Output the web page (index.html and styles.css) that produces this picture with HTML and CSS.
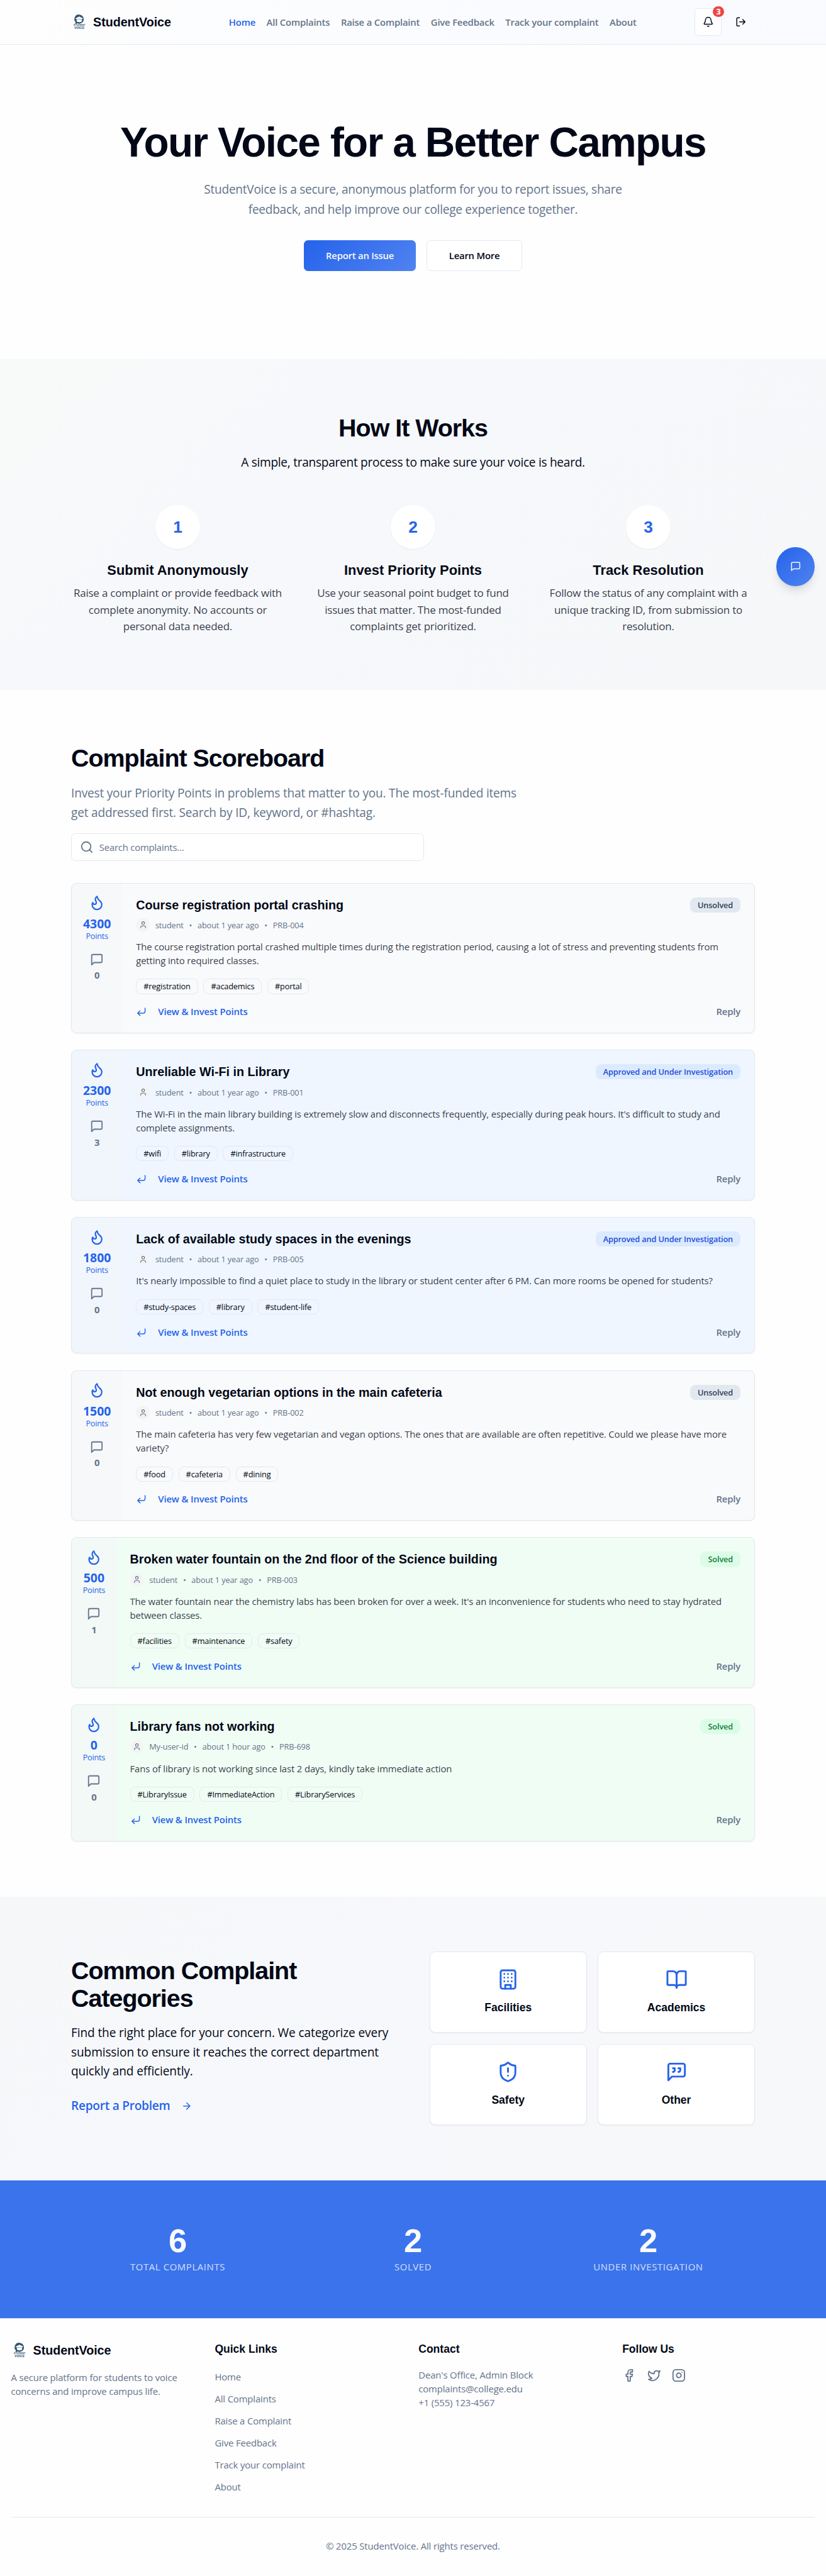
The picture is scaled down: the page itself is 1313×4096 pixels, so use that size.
FILE: index.html
```html
<!DOCTYPE html>
<html lang="en">
<head>
<meta charset="utf-8">
<title>StudentVoice</title>
<link rel="stylesheet" href="styles.css">
</head>
<body>
<svg class="sprite" aria-hidden="true">
  <symbol id="bell" viewBox="0 0 24 24"><path d="M10.268 21a2 2 0 0 0 3.464 0"/><path d="M3.262 15.326A1 1 0 0 0 4 17h16a1 1 0 0 0 .740-1.673C19.410 13.956 18 12.499 18 8A6 6 0 0 0 6 8c0 4.499-1.411 5.956-2.738 7.326"/></symbol>
  <symbol id="logout" viewBox="0 0 24 24"><path d="m16 17 5-5-5-5M21 12H9M9 21H5a2 2 0 0 1-2-2V5a2 2 0 0 1 2-2h4"/></symbol>
  <symbol id="message" viewBox="0 0 24 24"><path d="M21 15a2 2 0 0 1-2 2H7l-4 4V5a2 2 0 0 1 2-2h14a2 2 0 0 1 2 2z"/></symbol>
  <symbol id="quote" viewBox="0 0 24 24"><path d="M21 15a2 2 0 0 1-2 2H7l-4 4V5a2 2 0 0 1 2-2h14a2 2 0 0 1 2 2z"/><path d="M8 12a2 2 0 0 0 2-2V8H8M14 12a2 2 0 0 0 2-2V8h-2"/></symbol>
  <symbol id="search" viewBox="0 0 24 24"><circle cx="11" cy="11" r="8"/><path d="m21 21-4.300-4.300"/></symbol>
  <symbol id="flame" viewBox="0 0 24 24"><path d="M8.500 14.500A2.500 2.500 0 0 0 11 12c0-1.380-.5-2-1-3-1.072-2.143-.224-4.054 2-6 .5 2.500 2 4.900 4 6.500 2 1.600 3 3.500 3 5.500a7 7 0 1 1-14 0c0-1.153.433-2.294 1-3a2.500 2.500 0 0 0 2.500 2.500z"/></symbol>
  <symbol id="user" viewBox="0 0 24 24"><path d="M19 21v-2a4 4 0 0 0-4-4H9a4 4 0 0 0-4 4v2"/><circle cx="12" cy="7" r="4"/></symbol>
  <symbol id="enter" viewBox="0 0 24 24"><path d="M20 4v7a4 4 0 0 1-4 4H4"/><path d="m9 10-5 5 5 5"/></symbol>
  <symbol id="arrow" viewBox="0 0 24 24"><path d="M5 12h14M12 5l7 7-7 7"/></symbol>
  <symbol id="building" viewBox="0 0 24 24"><rect x="4" y="2" width="16" height="20" rx="2"/><path d="M9 22v-4h6v4M8 6h.01M16 6h.01M12 6h.01M12 10h.01M12 14h.01M16 10h.01M16 14h.01M8 10h.01M8 14h.01"/></symbol>
  <symbol id="book" viewBox="0 0 24 24"><path d="M12 7v14"/><path d="M3 18a1 1 0 0 1-1-1V4a1 1 0 0 1 1-1h5a4 4 0 0 1 4 4 4 4 0 0 1 4-4h5a1 1 0 0 1 1 1v13a1 1 0 0 1-1 1h-6a3 3 0 0 0-3 3 3 3 0 0 0-3-3z"/></symbol>
  <symbol id="shield" viewBox="0 0 24 24"><path d="M20 13c0 5-3.500 7.500-7.660 8.950a1 1 0 0 1-.67-.01C7.500 20.500 4 18 4 13V6a1 1 0 0 1 1-1c2 0 4.500-1.200 6.240-2.720a1.170 1.170 0 0 1 1.520 0C14.510 3.810 17 5 19 5a1 1 0 0 1 1 1z"/><path d="M12 8v4M12 16h.01"/></symbol>
  <symbol id="facebook" viewBox="0 0 24 24"><path d="M18 2h-3a5 5 0 0 0-5 5v3H7v4h3v8h4v-8h3l1-4h-4V7a1 1 0 0 1 1-1h3z"/></symbol>
  <symbol id="twitter" viewBox="0 0 24 24"><path d="M22 4s-.7 2.100-2 3.400c1.600 10-9.400 17.300-18 11.600 2.200.1 4.400-.6 6-2C3 15.500.5 9.600 3 5c2.200 2.600 5.600 4.100 9 4-.9-4.200 4-6.600 7-3.800 1.100 0 3-1.200 3-1.200z"/></symbol>
  <symbol id="instagram" viewBox="0 0 24 24"><rect x="2" y="2" width="20" height="20" rx="5"/><path d="M16 11.370A4 4 0 1 1 12.630 8 4 4 0 0 1 16 11.370zM17.500 6.500h.01"/></symbol>
</svg>

<header class="site-header">
  <div class="container header-row">
    <a class="brand"><svg class="logo" viewBox="0 0 48 48">
      <path class="logo-fill" d="M23.700 2.100a13.200 13.200 0 1 1-5.600 25.200c-2 1.300-4.300 1.900-6.800 1.700 1.200-1.200 1.900-2.700 1.900-4.600A13.200 13.200 0 0 1 23.700 2.100z"/>
      <path class="logo-cap" d="M12 13.500l11.700-5.700 11.700 5.700-4.200 2v6.300c-4.500 3.200-10.500 3.200-15 0v-6.300z"/>
      <path class="logo-line" d="M16.500 16.300c4.800-1.500 9.600-1.500 14.400 0M34.500 14.200v7"/>
      <text class="logo-text" x="7" y="35.500" font-size="6.600" textLength="34" lengthAdjust="spacingAndGlyphs">STUDENT</text>
      <text class="logo-text" x="9" y="44.500" font-size="10.200" textLength="30" lengthAdjust="spacingAndGlyphs">VOICE</text>
    </svg>StudentVoice</a>
    <nav class="nav">
      <a class="active">Home</a><a>All Complaints</a><a>Raise a Complaint</a><a>Give Feedback</a><a>Track your complaint</a><a>About</a>
    </nav>
    <div class="header-actions">
      <button class="icon-btn bell"><svg class="icon i16"><use href="#bell"/></svg><span class="count">3</span></button>
      <button class="icon-btn"><svg class="icon i16"><use href="#logout"/></svg></button>
    </div>
  </div>
</header>

<section class="hero">
  <h1>Your Voice for a Better Campus</h1>
  <p>StudentVoice is a secure, anonymous platform for you to report issues, share<br>feedback, and help improve our college experience together.</p>
  <div class="hero-actions"><a class="btn primary">Report an Issue</a><a class="btn outline">Learn More</a></div>
</section>

<section class="how">
  <div class="container">
    <h2>How It Works</h2>
    <p class="lead">A simple, transparent process to make sure your voice is heard.</p>
    <div class="steps">
      <div class="step"><span class="num">1</span><h3>Submit Anonymously</h3><p>Raise a complaint or provide feedback with<br>complete anonymity. No accounts or<br>personal data needed.</p></div>
      <div class="step"><span class="num">2</span><h3>Invest Priority Points</h3><p>Use your seasonal point budget to fund<br>issues that matter. The most-funded<br>complaints get prioritized.</p></div>
      <div class="step"><span class="num">3</span><h3>Track Resolution</h3><p>Follow the status of any complaint with a<br>unique tracking ID, from submission to<br>resolution.</p></div>
    </div>
  </div>
</section>

<section class="board">
  <div class="container">
    <h2>Complaint Scoreboard</h2>
    <p class="intro">Invest your Priority Points in problems that matter to you. The most-funded items<br>get addressed first. Search by ID, keyword, or #hashtag.</p>
    <div class="search"><svg class="icon i20"><use href="#search"/></svg><span>Search complaints...</span></div>
    <div class="cards">

      <article class="card">
        <div class="rail"><svg class="icon i24"><use href="#flame"/></svg><b>4300</b><small>Points</small><svg class="icon i20 msg"><use href="#message"/></svg><i>0</i></div>
        <div class="body">
          <div class="title"><h3>Course registration portal crashing</h3><span class="badge">Unsolved</span></div>
          <div class="meta"><span class="avatar"><svg class="icon i12"><use href="#user"/></svg></span><span>student</span><span>•</span><span>about 1 year ago</span><span>•</span><span>PRB-004</span></div>
          <p>The course registration portal crashed multiple times during the registration period, causing a lot of stress and preventing students from<br>getting into required classes.</p>
          <div class="tags"><span>#registration</span><span>#academics</span><span>#portal</span></div>
          <div class="foot"><a><svg class="icon i16"><use href="#enter"/></svg>View &amp; Invest Points</a><span>Reply</span></div>
        </div>
      </article>

      <article class="card review">
        <div class="rail"><svg class="icon i24"><use href="#flame"/></svg><b>2300</b><small>Points</small><svg class="icon i20 msg"><use href="#message"/></svg><i>3</i></div>
        <div class="body">
          <div class="title"><h3>Unreliable Wi-Fi in Library</h3><span class="badge">Approved and Under Investigation</span></div>
          <div class="meta"><span class="avatar"><svg class="icon i12"><use href="#user"/></svg></span><span>student</span><span>•</span><span>about 1 year ago</span><span>•</span><span>PRB-001</span></div>
          <p>The Wi-Fi in the main library building is extremely slow and disconnects frequently, especially during peak hours. It's difficult to study and<br>complete assignments.</p>
          <div class="tags"><span>#wifi</span><span>#library</span><span>#infrastructure</span></div>
          <div class="foot"><a><svg class="icon i16"><use href="#enter"/></svg>View &amp; Invest Points</a><span>Reply</span></div>
        </div>
      </article>

      <article class="card review">
        <div class="rail"><svg class="icon i24"><use href="#flame"/></svg><b>1800</b><small>Points</small><svg class="icon i20 msg"><use href="#message"/></svg><i>0</i></div>
        <div class="body">
          <div class="title"><h3>Lack of available study spaces in the evenings</h3><span class="badge">Approved and Under Investigation</span></div>
          <div class="meta"><span class="avatar"><svg class="icon i12"><use href="#user"/></svg></span><span>student</span><span>•</span><span>about 1 year ago</span><span>•</span><span>PRB-005</span></div>
          <p>It's nearly impossible to find a quiet place to study in the library or student center after 6 PM. Can more rooms be opened for students?</p>
          <div class="tags"><span>#study-spaces</span><span>#library</span><span>#student-life</span></div>
          <div class="foot"><a><svg class="icon i16"><use href="#enter"/></svg>View &amp; Invest Points</a><span>Reply</span></div>
        </div>
      </article>

      <article class="card">
        <div class="rail"><svg class="icon i24"><use href="#flame"/></svg><b>1500</b><small>Points</small><svg class="icon i20 msg"><use href="#message"/></svg><i>0</i></div>
        <div class="body">
          <div class="title"><h3>Not enough vegetarian options in the main cafeteria</h3><span class="badge">Unsolved</span></div>
          <div class="meta"><span class="avatar"><svg class="icon i12"><use href="#user"/></svg></span><span>student</span><span>•</span><span>about 1 year ago</span><span>•</span><span>PRB-002</span></div>
          <p>The main cafeteria has very few vegetarian and vegan options. The ones that are available are often repetitive. Could we please have more<br>variety?</p>
          <div class="tags"><span>#food</span><span>#cafeteria</span><span>#dining</span></div>
          <div class="foot"><a><svg class="icon i16"><use href="#enter"/></svg>View &amp; Invest Points</a><span>Reply</span></div>
        </div>
      </article>

      <article class="card solved">
        <div class="rail"><svg class="icon i24"><use href="#flame"/></svg><b>500</b><small>Points</small><svg class="icon i20 msg"><use href="#message"/></svg><i>1</i></div>
        <div class="body">
          <div class="title"><h3>Broken water fountain on the 2nd floor of the Science building</h3><span class="badge">Solved</span></div>
          <div class="meta"><span class="avatar"><svg class="icon i12"><use href="#user"/></svg></span><span>student</span><span>•</span><span>about 1 year ago</span><span>•</span><span>PRB-003</span></div>
          <p>The water fountain near the chemistry labs has been broken for over a week. It's an inconvenience for students who need to stay hydrated<br>between classes.</p>
          <div class="tags"><span>#facilities</span><span>#maintenance</span><span>#safety</span></div>
          <div class="foot"><a><svg class="icon i16"><use href="#enter"/></svg>View &amp; Invest Points</a><span>Reply</span></div>
        </div>
      </article>

      <article class="card solved">
        <div class="rail"><svg class="icon i24"><use href="#flame"/></svg><b>0</b><small>Points</small><svg class="icon i20 msg"><use href="#message"/></svg><i>0</i></div>
        <div class="body">
          <div class="title"><h3>Library fans not working</h3><span class="badge">Solved</span></div>
          <div class="meta"><span class="avatar"><svg class="icon i12"><use href="#user"/></svg></span><span>My-user-id</span><span>•</span><span>about 1 hour ago</span><span>•</span><span>PRB-698</span></div>
          <p>Fans of library is not working since last 2 days, kindly take immediate action</p>
          <div class="tags"><span>#LibraryIssue</span><span>#ImmediateAction</span><span>#LibraryServices</span></div>
          <div class="foot"><a><svg class="icon i16"><use href="#enter"/></svg>View &amp; Invest Points</a><span>Reply</span></div>
        </div>
      </article>

    </div>
  </div>
</section>

<section class="categories">
  <div class="container cat-row">
    <div>
      <h2>Common Complaint<br>Categories</h2>
      <p>Find the right place for your concern. We categorize every<br>submission to ensure it reaches the correct department<br>quickly and efficiently.</p>
      <a class="report">Report a Problem<svg class="icon i16"><use href="#arrow"/></svg></a>
    </div>
    <div class="tiles">
      <div class="tile"><svg class="icon i32"><use href="#building"/></svg><h3>Facilities</h3></div>
      <div class="tile"><svg class="icon i32"><use href="#book"/></svg><h3>Academics</h3></div>
      <div class="tile"><svg class="icon i32"><use href="#shield"/></svg><h3>Safety</h3></div>
      <div class="tile"><svg class="icon i32"><use href="#quote"/></svg><h3>Other</h3></div>
    </div>
  </div>
</section>

<section class="stats">
  <div class="container stat-row">
    <div><strong>6</strong><span>Total Complaints</span></div>
    <div><strong>2</strong><span>Solved</span></div>
    <div><strong>2</strong><span>Under Investigation</span></div>
  </div>
</section>

<footer class="site-footer">
  <div class="foot-cols">
    <div><a class="brand"><svg class="logo" viewBox="0 0 48 48">
      <path class="logo-fill" d="M23.700 2.100a13.200 13.200 0 1 1-5.600 25.200c-2 1.300-4.300 1.900-6.800 1.700 1.200-1.200 1.900-2.700 1.900-4.600A13.200 13.200 0 0 1 23.700 2.100z"/>
      <path class="logo-cap" d="M12 13.500l11.700-5.700 11.700 5.700-4.200 2v6.300c-4.500 3.200-10.500 3.200-15 0v-6.300z"/>
      <path class="logo-line" d="M16.500 16.300c4.800-1.500 9.600-1.500 14.400 0M34.500 14.200v7"/>
      <text class="logo-text" x="7" y="35.500" font-size="6.600" textLength="34" lengthAdjust="spacingAndGlyphs">STUDENT</text>
      <text class="logo-text" x="9" y="44.500" font-size="10.200" textLength="30" lengthAdjust="spacingAndGlyphs">VOICE</text>
    </svg>StudentVoice</a><p class="about">A secure platform for students to voice<br>concerns and improve campus life.</p></div>
    <div><h3>Quick Links</h3><ul><li>Home</li><li>All Complaints</li><li>Raise a Complaint</li><li>Give Feedback</li><li>Track your complaint</li><li>About</li></ul></div>
    <div><h3>Contact</h3><p>Dean's Office, Admin Block<br>complaints@college.edu<br>+1 (555) 123-4567</p></div>
    <div><h3>Follow Us</h3><div class="social"><svg class="icon i20"><use href="#facebook"/></svg><svg class="icon i20"><use href="#twitter"/></svg><svg class="icon i20"><use href="#instagram"/></svg></div></div>
  </div>
  <p class="copy">© 2025 StudentVoice. All rights reserved.</p>
</footer>

<button class="chat"><svg class="icon i16"><use href="#message"/></svg></button>
</body>
</html>
```
FILE: styles.css
```css
:root {
  font-size: 17.532px;
  --ink: #020817;
  --muted: #64748b;
  --line: #e2e8f0;
  --blue: #2563eb;
  --body: rgba(2, 8, 23, .8);
}
*, *::before, *::after { box-sizing: border-box; }
body {
  margin: 0;
  position: relative;
  background: #fefefe;
  color: var(--ink);
  font-family: "Open Sans", "Noto Sans", sans-serif;
  font-size: .97rem;
  line-height: 1.5rem;
  letter-spacing: -.013em;
}
h1, h2, h3, p, ul { margin: 0; padding: 0; }
li { list-style: none; }
h1, h2, h3, .brand, .num, .stats strong { font-family: "Liberation Sans", Arial, sans-serif; font-weight: 700; }
h2 { font-size: 2.25rem; line-height: 2.5rem; letter-spacing: -.026em; }
h3 { letter-spacing: 0; }
button { border: 0; padding: 0; background: none; color: inherit; font: inherit; }
.sprite { position: absolute; width: 0; height: 0; }
.logo-fill, .logo-text { fill: #33566f; }
.logo-cap { fill: #fff; }
.logo-line { fill: none; stroke: #33566f; }
.logo-text { font-family: "Liberation Sans", sans-serif; font-weight: 700; letter-spacing: 0; }

.icon { flex: none; fill: none; stroke: currentColor; stroke-width: 2; stroke-linecap: round; stroke-linejoin: round; }
.i12 { width: .75rem; height: .75rem; }
.i16 { width: 1rem; height: 1rem; }
.i20 { width: 1.25rem; height: 1.25rem; }
.i24 { width: 1.5rem; height: 1.5rem; }
.i32 { width: 2rem; height: 2rem; }

.container { width: 62rem; margin: 0 auto; }

.site-header { height: 4.0625rem; border-bottom: 1px solid var(--line); background: linear-gradient(135deg, #fefefe, #f8faff); }
.header-row { height: 4rem; display: flex; align-items: center; justify-content: space-between; }
.brand { display: flex; align-items: center; gap: .5rem; font-size: 1.125rem; line-height: 1.75rem; letter-spacing: -.003em; }
.logo { width: 1.5rem; height: 1.5rem; }
.nav { display: flex; gap: 1rem; font-size: .849rem; font-weight: 600; letter-spacing: -.013em; color: var(--muted); white-space: nowrap; }
.nav .active { color: var(--blue); }
.header-actions { display: flex; gap: .5rem; }
.icon-btn { position: relative; width: 2.5rem; height: 2.5rem; display: flex; align-items: center; justify-content: center; border-radius: .375rem; }
.bell { border: 1px solid var(--line); background: #fff; }
.count { position: absolute; top: -.25rem; right: -.25rem; width: 1rem; height: 1rem; border-radius: 50%; background: #ef4444; color: #fff; font-size: .72rem; line-height: 1rem; font-weight: 700; text-align: center; }

.hero { height: 28.5rem; padding-top: 7rem; text-align: center; }
h1 { font-size: 3.75rem; line-height: 3.75rem; letter-spacing: -.025em; }
.hero p { margin-top: 1.5rem; font-size: 1.091rem; line-height: 1.8rem; letter-spacing: -.015em; color: var(--muted); }
.hero-actions { display: flex; justify-content: center; gap: 1rem; margin-top: 1.9rem; }
.btn { height: 2.75rem; display: flex; align-items: center; justify-content: center; border-radius: .375rem; font-size: .849rem; font-weight: 600; letter-spacing: -.016em; }
.primary { width: 10.13rem; background: linear-gradient(135deg, #2563eb, #5083f0); color: #f8fafc; }
.outline { width: 8.63rem; border: 1px solid var(--line); background: #fff; }

.how { height: 30rem; padding-top: 5rem; text-align: center; background: linear-gradient(135deg, #f8faf9, #f7f8fb 30%, #f5f7f9); }
.lead { margin-top: 1rem; font-size: 1.091rem; line-height: 1.75rem; letter-spacing: -.015em; }
.steps { display: grid; grid-template-columns: repeat(3, 1fr); gap: 2rem; margin-top: 3rem; }
.num { display: block; width: 4rem; height: 4rem; margin: 0 auto 1rem; border-radius: 50%; background: #fff; color: var(--blue); font-size: 1.5rem; line-height: 4rem; box-shadow: 0 1px 2px rgba(0, 0, 0, .06); }
.step h3 { font-size: 1.25rem; line-height: 1.8rem; }
.step p { margin-top: .45rem; color: var(--body); white-space: nowrap; }

.chat { position: absolute; right: 1rem; top: 49.65rem; width: 3.5rem; height: 3.5rem; display: flex; align-items: center; justify-content: center; border-radius: 50%; color: #f8fafc; background: linear-gradient(135deg, #2563eb, #5083f0); box-shadow: 0 10px 16px -3px rgba(0, 0, 0, .12), 0 4px 6px -4px rgba(0, 0, 0, .12); }

.board { height: 109.44rem; padding: 5rem 0; }
.intro { margin-top: 1rem; font-size: 1.091rem; line-height: 1.75rem; letter-spacing: -.011em; color: var(--muted); white-space: nowrap; }
.search { width: 32rem; height: 2.5rem; margin-top: 1rem; padding: 0 .75rem; display: flex; align-items: center; gap: .5rem; border: 1px solid var(--line); border-radius: .375rem; background: #fff; color: var(--muted); font-size: .849rem; }
.cards { display: flex; flex-direction: column; gap: 1.5rem; margin-top: 2rem; }
.card { --rail: 4.58rem; display: flex; overflow: hidden; border: 1px solid var(--line); border-radius: .5rem; background: #f9fafb; box-shadow: 0 1px 2px rgba(0, 0, 0, .05); }
.review { background: #eff6ff; }
.solved { --rail: 4.03rem; background: #f0fdf4; }
.rail { flex: none; width: var(--rail); padding-top: 1rem; display: flex; flex-direction: column; align-items: center; background: rgba(244, 245, 249, .5); color: var(--blue); }
.rail b { margin-top: .52rem; font-size: 1.11rem; line-height: 1.25rem; font-weight: 700; letter-spacing: 0; }
.rail small { font-size: .728rem; line-height: 1rem; letter-spacing: -.022em; }
.msg { margin-top: 1rem; color: var(--muted); }
.rail i { margin-top: .22rem; color: var(--muted); font-size: .849rem; line-height: 1.25rem; font-style: normal; font-weight: 700; }
.body { flex: 1; min-width: 0; padding: 1.255rem 1.25rem; }
.title { height: 1.406rem; display: flex; justify-content: space-between; align-items: flex-start; }
.title h3 { font-size: 1.125rem; line-height: 1.406rem; }
.badge { padding: 0 .6875rem; height: 1.375rem; border-radius: .5rem; background: #e2e8f0; color: #334155; font-size: .728rem; line-height: 1.375rem; font-weight: 600; letter-spacing: -.012em; }
.review .badge { background: #dbeafe; color: #1d4ed8; }
.solved .badge { background: #dcfce7; color: #15803d; }
.meta { display: flex; align-items: center; gap: .5rem; margin-top: .5rem; height: 1.25rem; color: var(--muted); font-size: .728rem; letter-spacing: -.01em; }
.avatar { width: 1.25rem; height: 1.25rem; display: flex; align-items: center; justify-content: center; border-radius: 50%; background: #f4f4f5; }
.card p { margin-top: .75rem; color: var(--body); font-size: .849rem; line-height: 1.25rem; letter-spacing: -.009em; white-space: nowrap; }
.tags { display: flex; gap: .5rem; margin-top: 1rem; }
.tags span { height: 1.375rem; padding: 0 .625rem; border: 1px solid var(--line); border-radius: .5rem; font-size: .728rem; line-height: 1.27rem; letter-spacing: -.014em; }
.foot { display: flex; justify-content: space-between; margin-top: 1rem; color: var(--muted); font-size: .849rem; line-height: 1.25rem; font-weight: 600; letter-spacing: -.01em; }
.foot a { display: flex; align-items: center; gap: 1rem; color: var(--blue); }

.categories { height: 25.75rem; padding-top: 5rem; background: linear-gradient(135deg, #f5f7f9, #f7f8fb 45%, #f7f8f9); }
.cat-row { display: grid; grid-template-columns: 1fr 1fr; gap: 3rem; align-items: center; }
.cat-row p { margin-top: 1rem; font-size: 1.091rem; line-height: 1.75rem; letter-spacing: -.007em; white-space: nowrap; }
.report { display: flex; align-items: center; gap: 1rem; height: 2.5rem; margin-top: 1rem; color: var(--blue); font-size: 1.091rem; font-weight: 600; letter-spacing: -.014em; }
.tiles { display: grid; grid-template-columns: 1fr 1fr; gap: 1rem; }
.tile { height: 7.375rem; padding-top: 1.5rem; text-align: center; border: 1px solid var(--line); border-radius: .5rem; background: #fff; box-shadow: 0 1px 2px rgba(0, 0, 0, .05); color: var(--blue); }
.tile svg { display: block; margin: 0 auto .75rem; }
.tile h3 { color: var(--ink); font-size: 1rem; line-height: 1.5rem; }

.stats { height: 12.5rem; padding-top: 4rem; background: #3a73ec; color: #f8fafc; text-align: center; }
.stat-row { display: grid; grid-template-columns: repeat(3, 1fr); gap: 2rem; }
.stats strong { display: block; font-size: 3rem; line-height: 3rem; }
.stats span { display: block; margin-top: .25rem; font-size: .849rem; line-height: 1.25rem; letter-spacing: .042em; text-transform: uppercase; opacity: .8; }

.site-footer { border-top: 1px solid var(--line); padding: 2rem 1rem; color: var(--muted); font-size: .849rem; line-height: 1.25rem; letter-spacing: -.009em; }
.site-footer h3, .site-footer .brand { color: var(--ink); }
.site-footer h3 { font-size: 1rem; line-height: 1.5rem; margin-bottom: 1rem; }
.foot-cols { display: grid; grid-template-columns: repeat(4, 1fr); gap: 1rem; height: 16rem; border-bottom: 1px solid var(--line); }
.about { margin-top: 1rem; }
.site-footer li { line-height: 1.5rem; margin-bottom: .5rem; }
.social { display: flex; gap: 1rem; }
.copy { margin-top: 2rem; text-align: center; }
```
